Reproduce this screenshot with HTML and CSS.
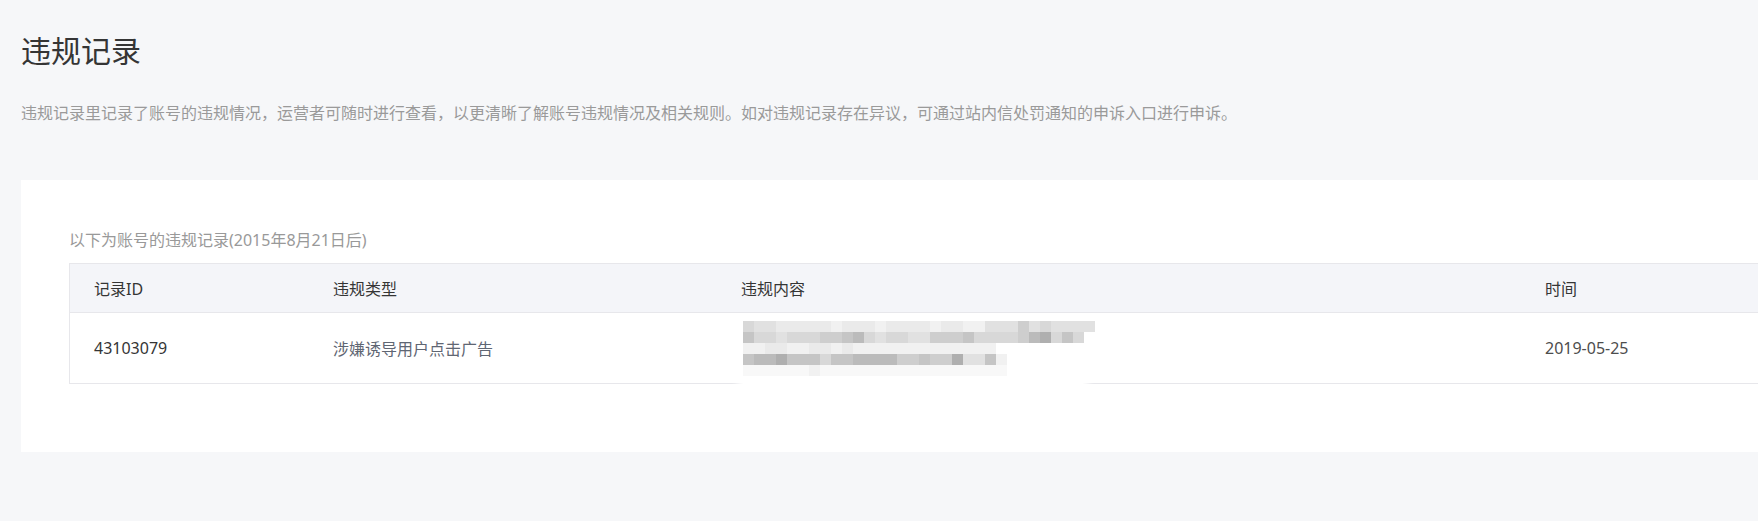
FILE: index.html
```html
<!DOCTYPE html>
<html lang="zh-CN">
<head>
<meta charset="utf-8">
<title>违规记录</title>
<link rel="stylesheet" href="styles.css">
</head>
<body>
<div class="page">
  <h2 class="page-title">违规记录</h2>
  <p class="page-desc">违规记录里记录了账号的违规情况，运营者可随时进行查看，以更清晰了解账号违规情况及相关规则。如对违规记录存在异议，可通过站内信处罚通知的申诉入口进行申诉。</p>

  <div class="card">
    <div class="card-caption">以下为账号的违规记录(2015年8月21日后)</div>
    <table class="record-table">
      <colgroup>
        <col class="col-id">
        <col class="col-type">
        <col class="col-content">
        <col>
      </colgroup>
      <thead>
        <tr>
          <th>记录ID</th>
          <th>违规类型</th>
          <th>违规内容</th>
          <th>时间</th>
        </tr>
      </thead>
      <tbody>
        <tr>
          <td class="cell-id">43103079</td>
          <td class="cell-type">涉嫌诱导用户点击广告</td>
          <td class="cell-content">
            <div class="halo"></div>
            <div class="mosaic">
              <div class="mrow"><span class="c4"></span><span class="c3"></span><span class="c3"></span><span class="c2"></span><span class="c2"></span><span class="c2"></span><span class="c2"></span><span class="c2"></span><span class="c1"></span><span class="c2"></span><span class="c2"></span><span class="c2"></span><span class="c1"></span><span class="c2"></span><span class="c2"></span><span class="c2"></span><span class="c2"></span><span class="c1"></span><span class="c2"></span><span class="c2"></span><span class="c1"></span><span class="c1"></span><span class="c3"></span><span class="c3"></span><span class="c3"></span><span class="c5"></span><span class="c3"></span><span class="c4"></span><span class="c3"></span><span class="c3"></span><span class="c3"></span><span class="c3"></span></div>
              <div class="mrow"><span class="c6"></span><span class="c4"></span><span class="c4"></span><span class="c3"></span><span class="c4"></span><span class="c4"></span><span class="c4"></span><span class="c5"></span><span class="c5"></span><span class="c6"></span><span class="c7"></span><span class="c4"></span><span class="c3"></span><span class="c4"></span><span class="c4"></span><span class="c3"></span><span class="c3"></span><span class="c5"></span><span class="c5"></span><span class="c5"></span><span class="c6"></span><span class="c4"></span><span class="c4"></span><span class="c4"></span><span class="c4"></span><span class="c5"></span><span class="c7"></span><span class="c8"></span><span class="c4"></span><span class="c6"></span><span class="c4"></span></div>
              <div class="mrow"><span class="c1"></span><span class="c1"></span><span class="c2"></span><span class="c2"></span><span class="c1"></span><span class="c1"></span><span class="c2"></span><span class="c2"></span><span class="c1"></span><span class="c2"></span><span class="c1"></span><span class="c1"></span><span class="c1"></span><span class="c1"></span><span class="c1"></span><span class="c1"></span><span class="c1"></span><span class="c1"></span><span class="c1"></span><span class="c1"></span><span class="c1"></span><span class="c1"></span><span class="c1"></span></div>
              <div class="mrow"><span class="c6"></span><span class="c7"></span><span class="c7"></span><span class="c8"></span><span class="c6"></span><span class="c6"></span><span class="c6"></span><span class="c4"></span><span class="c6"></span><span class="c6"></span><span class="c7"></span><span class="c7"></span><span class="c7"></span><span class="c7"></span><span class="c5"></span><span class="c5"></span><span class="c6"></span><span class="c5"></span><span class="c5"></span><span class="c8"></span><span class="c3"></span><span class="c3"></span><span class="c6"></span><span class="c1"></span></div>
              <div class="mrow"><span class="c0"></span><span class="c0"></span><span class="c0"></span><span class="c0"></span><span class="c0"></span><span class="c0"></span><span class="c1"></span><span class="c0"></span><span class="c0"></span><span class="c0"></span><span class="c0"></span><span class="c0"></span><span class="c0"></span><span class="c0"></span><span class="c0"></span><span class="c0"></span><span class="c0"></span><span class="c0"></span><span class="c0"></span><span class="c0"></span><span class="c0"></span><span class="c0"></span><span class="c0"></span><span class="c0"></span></div>
            </div>
          </td>
          <td class="cell-time">2019-05-25</td>
        </tr>
      </tbody>
    </table>
  </div>
</div>
</body>
</html>
```

FILE: styles.css
```css
body {
  margin: 0;
  background-color: #f6f7f9;
  font-family: "Noto Sans", "Noto Sans CJK SC", sans-serif;
  overflow: hidden;
}

.page {
  width: 1900px;
  padding: 31px 0 0 21px;
}

.page-title {
  margin: 0;
  font-size: 30px;
  line-height: 40px;
  font-weight: 400;
  color: #353535;
}

.page-desc {
  margin: 30px 0 0;
  font-size: 16px;
  line-height: 24px;
  color: #9a9a9a;
}

.card {
  margin-top: 55px;
  background-color: #fff;
  padding: 48px 48px 68px;
}

.card-caption {
  font-size: 16px;
  line-height: 24px;
  color: #999;
  margin-bottom: 11px;
}

.record-table {
  width: 100%;
  table-layout: fixed;
  border-collapse: separate;
  border-spacing: 0;
  border-left: 1px solid #e7e7eb;
  border-top: 1px solid #e7e7eb;
  font-size: 16px;
}

.col-id { width: 239px; }
.col-type { width: 408px; }
.col-content { width: 804px; }

.record-table th {
  height: 48px;
  padding: 0 0 0 24px;
  background-color: #f4f5f9;
  border-bottom: 1px solid #e7e7eb;
  text-align: left;
  font-weight: 400;
  color: #353535;
}

.record-table td {
  height: 70px;
  padding: 0 0 0 24px;
  border-bottom: 1px solid #e7e7eb;
  color: #353535;
}

.record-table td.cell-type { color: #5f6673; }
.record-table td.cell-time { color: #4d4d4d; }

.cell-content { position: relative; }

.halo {
  position: absolute;
  left: 14px;
  top: 14px;
  width: 364px;
  bottom: -4px;
  background-color: #fff;
  border-radius: 24px;
  box-shadow: 0 0 5px 3px #fff;
}

.mosaic {
  position: relative;
  margin-left: 2px;
}

.mrow { display: flex; }
.mrow span { width: 11px; height: 11px; }

.c0 { background-color: #f8f8f8; }
.c1 { background-color: #f1f1f1; }
.c2 { background-color: #eaeaea; }
.c3 { background-color: #e1e1e1; }
.c4 { background-color: #d8d8d8; }
.c5 { background-color: #cecece; }
.c6 { background-color: #c5c5c5; }
.c7 { background-color: #bbbbbb; }
.c8 { background-color: #afafaf; }
```
